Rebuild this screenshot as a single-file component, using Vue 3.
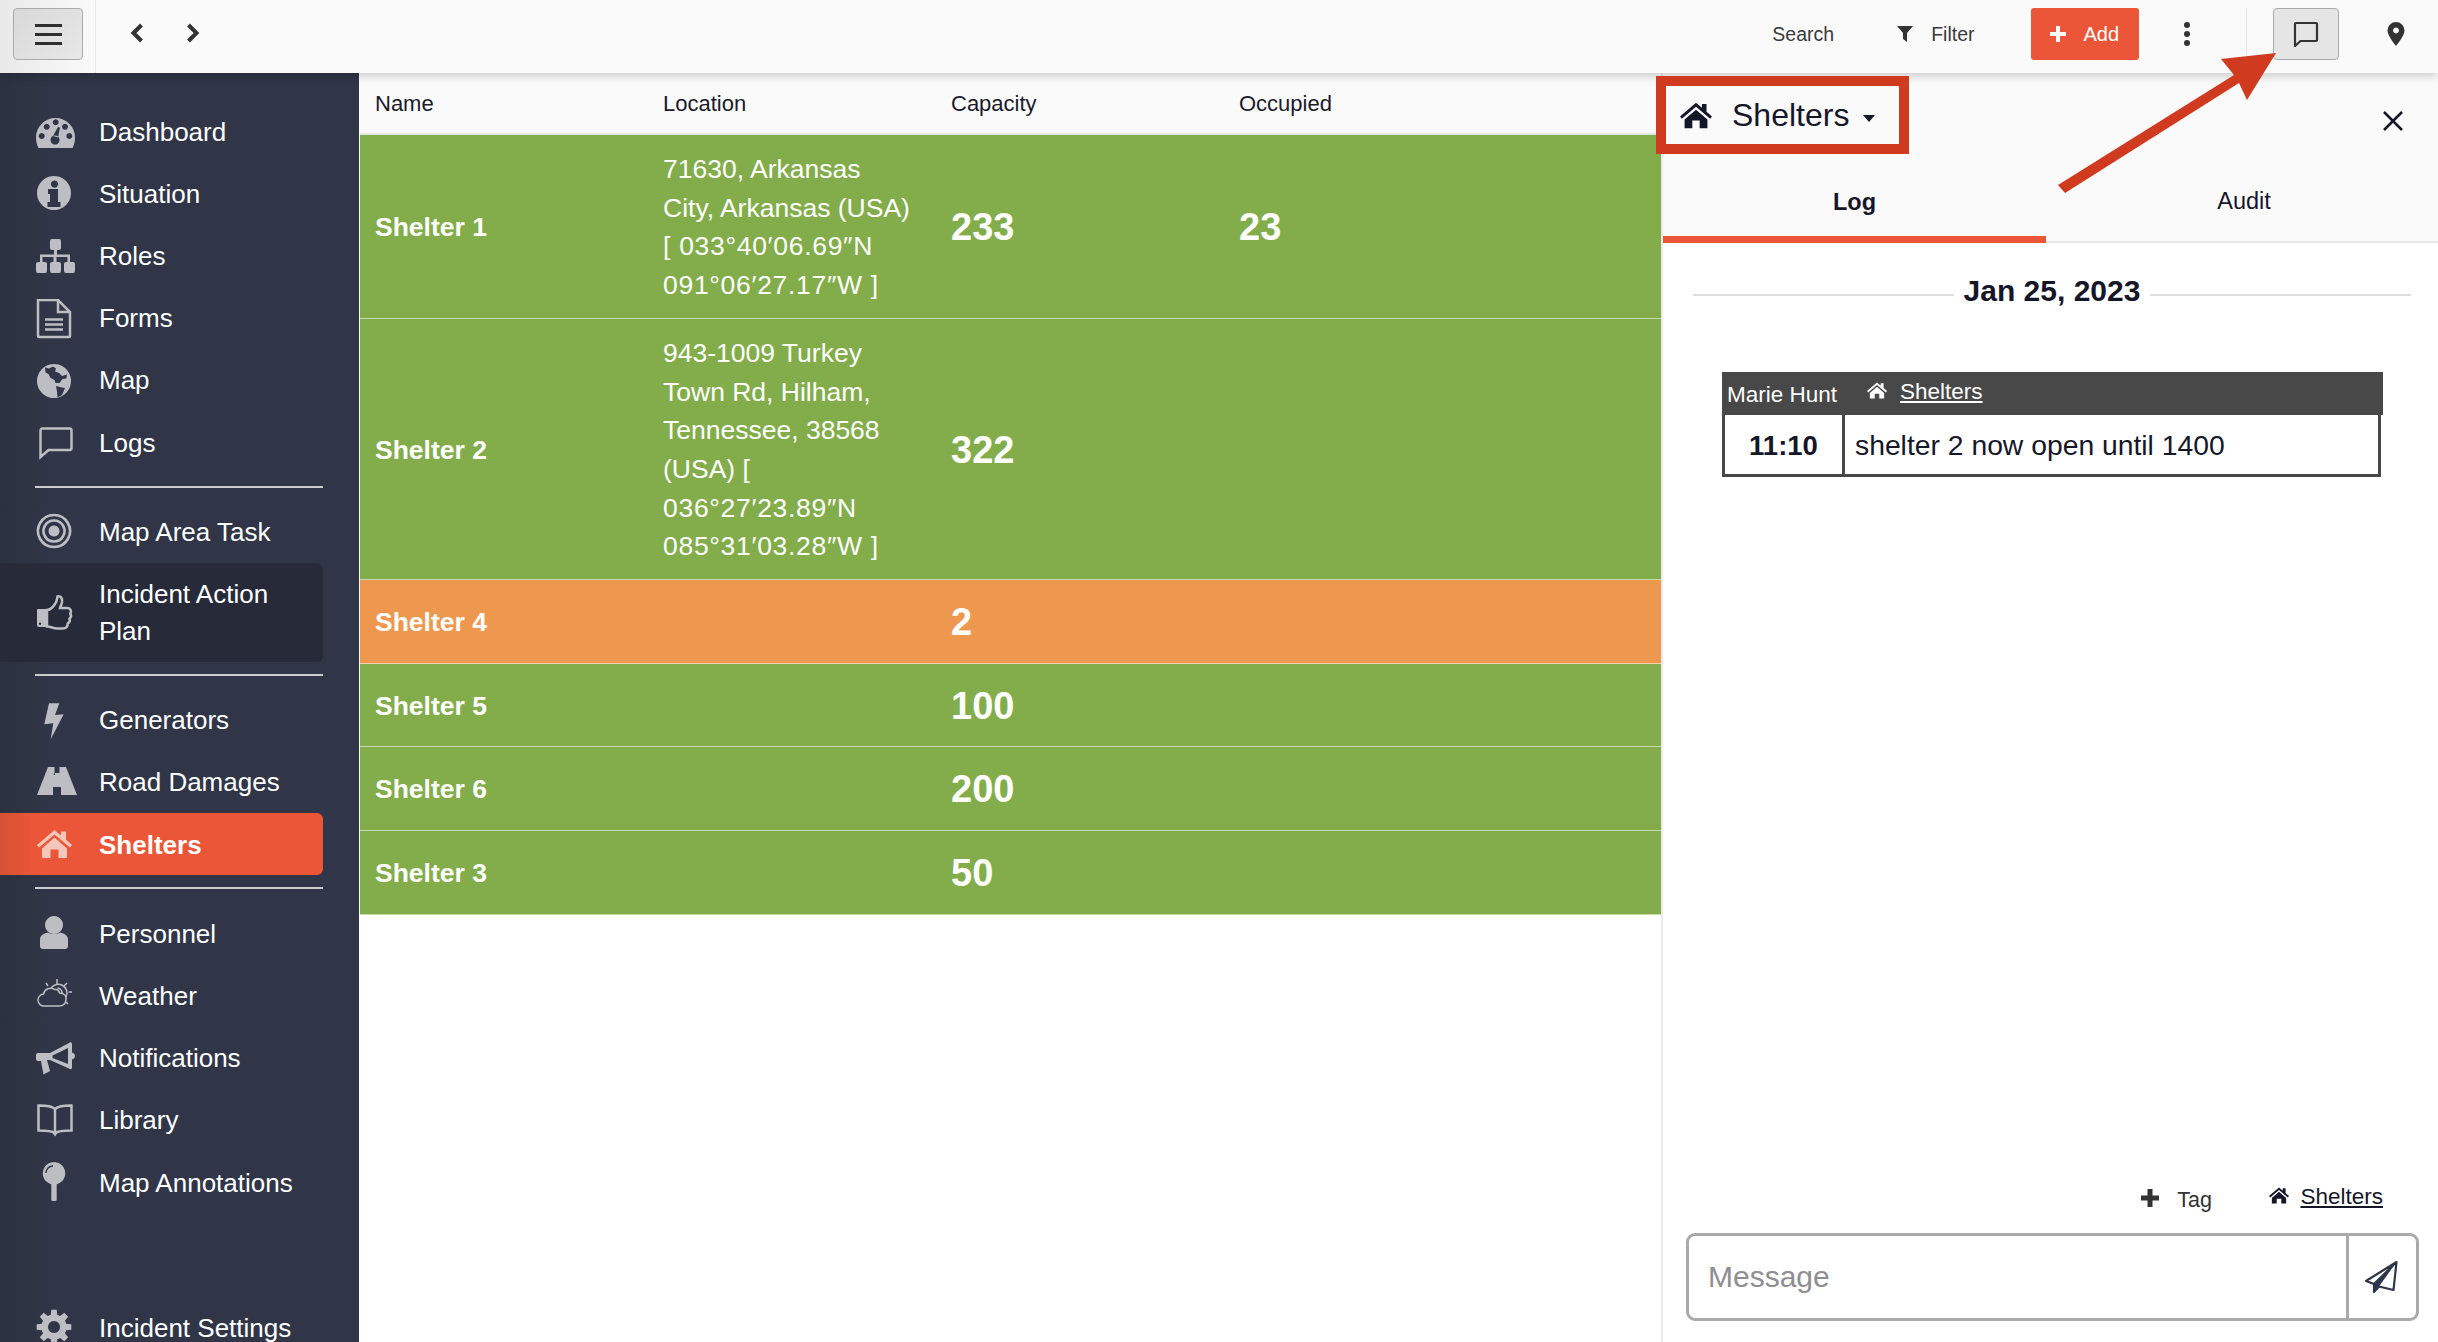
<script setup>
function gear(cx, cy, outer, inner, teeth) {
  let d = '';
  const step = (Math.PI * 2) / teeth;
  for (let i = 0; i < teeth; i++) {
    const a = i * step;
    const pts = [
      [inner, a - step * 0.34],
      [outer, a - step * 0.2],
      [outer, a + step * 0.2],
      [inner, a + step * 0.34],
    ];
    pts.forEach(([r, t], j) => {
      const x = (cx + r * Math.cos(t)).toFixed(1);
      const y = (cy + r * Math.sin(t)).toFixed(1);
      d += (i === 0 && j === 0 ? 'M' : 'L') + x + ' ' + y + ' ';
    });
  }
  return d + 'Z';
}

const homeRoof = 'M19.5 6 2 21l2 2.6L19.5 10.4 35 23.6l2-2.6-6-5.2V7.5h-5v4z';
const homeBody = 'M7 24.5 19.5 13.6 32 24.5V34H23.5V25.5h-8V34H7z';

const icons = {
  dashboard: [
    { c: 'f', d: 'M3.5 36C1.8 33 1 29 1 25.5a19.5 19.5 0 0 1 39 0c0 3.500-.8 7.500-2.500 10.500z' },
    { c: 'c', d: 'M6.700 21a3 3 0 1 0 .01 0zM11.700 11.700a3 3 0 1 0 .01 0zM20.700 7.300a3 3 0 1 0 .01 0zM30 11.700a3 3 0 1 0 .01 0zM34.300 21a3 3 0 1 0 .01 0z' },
    { c: 'c', d: 'M20 23.500a4.500 4.500 0 1 0 .01 0zM18 24l5-9 2 .5-2 10z' },
  ],
  info: [
    { c: 'f', d: 'M19 2a17 17 0 1 0 .01 0z' },
    { c: 'c', d: 'M19.500 6.500a3.600 3.600 0 1 0 .01 0zM13 15h10v13h2.500v5h-13v-5H15v-8h-2z' },
  ],
  sitemap: [
    { c: 'f', d: 'M17 3h7a2 2 0 0 1 2 2v7a2 2 0 0 1-2 2h-2v4.500h13V26h-2.500v-5h-11v5h-3v-5H7.500v5H5v-7.500h14V14h-2a2 2 0 0 1-2-2V5a2 2 0 0 1 2-2z' },
    { c: 'f', d: 'M3 26h7a2 2 0 0 1 2 2v7a2 2 0 0 1-2 2H3a2 2 0 0 1-2-2v-7a2 2 0 0 1 2-2zM17 26h7a2 2 0 0 1 2 2v7a2 2 0 0 1-2 2h-7a2 2 0 0 1-2-2v-7a2 2 0 0 1 2-2zM31 26h7a2 2 0 0 1 2 2v7a2 2 0 0 1-2 2h-7a2 2 0 0 1-2-2v-7a2 2 0 0 1 2-2z' },
  ],
  file: [
    { c: 'l', d: 'M3 1h20l12 12v24a1 1 0 0 1-1 1H4a1 1 0 0 1-1-1z' },
    { c: 'l', d: 'M23 1v12h12' },
    { c: 'l', d: 'M10 20.500h18M10 25.500h18M10 30.500h18' },
  ],
  globe: [
    { c: 'f', d: 'M19 3a17 17 0 1 0 .01 0z' },
    { c: 'c', d: 'M10 6.500l4 1 4-2 3 2-1 3 4 1.500 3 3 5-1.500-.5 4-4 .5-3 4h-4l-1-3-4-2-2-4-3-1.500z' },
    { c: 'c', d: 'M21 25l6 1.500 3 .5-3 7-4.500 2.500-.5-6z' },
  ],
  comment: [
    { c: 'l', d: 'M7 5.500h27.500a2 2 0 0 1 2 2V25a2 2 0 0 1-2 2H13.500L5.500 34V7.500a2 2 0 0 1 1.500-2z' },
  ],
  target: [
    { c: 'ring', d: 'M19 3a16 16 0 1 0 .01 0z' },
    { c: 'ring', d: 'M19 8.500a10.500 10.500 0 1 0 .01 0z' },
    { c: 'f', d: 'M19 13.500a5.500 5.500 0 1 0 .01 0z' },
  ],
  thumb: [
    { c: 'f', d: 'M3 16h9v18H4a2 2 0 0 1-2-2V17a1 1 0 0 1 1-1z' },
    { c: 'l', d: 'M12 17c3 0 6-3 8-6 2-2.500 2-5 2.500-7.500 3-1 5.500 2 4.500 6-.5 2-1.500 3.500-2 5.500h7.500c3 0 4.500 3.500 2.800 5.500 1.200 2 .7 4-.8 5.200.7 2-.3 4-1.800 4.800.3 3-1.700 5-4.700 5H22c-4 0-6-2-10-2z' },
    { c: 'c', d: 'M5 29.500a1.200 1.200 0 1 0 .01 0z' },
  ],
  bolt: [
    { c: 'f', d: 'M14 3.300h10.300L20 15l8.700-.7-13 25 2.600-16-9 1z' },
  ],
  road: [
    { c: 'f', d: 'M13 5h18l11 28H2z' },
    { c: 'c', d: 'M19.500 5h5v6h-5zM18 25h8v8h-8zM18.800 11h1v2h-1z' },
  ],
  home: [
    { c: 'f', d: homeRoof },
    { c: 'f', d: homeBody },
  ],
  user: [
    { c: 'f', d: 'M19 3a9 9 0 1 0 .01 0z' },
    { c: 'f', d: 'M5 33v-6c0-4.500 3-6.500 8-7.500 3.500 2 8.500 2 12 0 5 1 8 3 8 7.500v6a3 3 0 0 1-3 3H8a3 3 0 0 1-3-3z' },
  ],
  weather: [
    { c: 'thin', d: 'M9.500 30a6 6 0 0 1-1-12c1-5 7-7.500 11-4.500 3-.5 4.500 1 5 3.500 4.500 0 7 2.500 6.500 6.500-.3 4-3 6.500-7 6.500z' },
    { c: 'thin', d: 'M15.500 13a8.500 8.500 0 0 1 15.500 8' },
    { c: 'thin', d: 'M22 3v5M32 7l-3 3M37 16h-3.500M33 28l-2-2M11 7l2 3M22.500 12c3 .5 5 3 4.500 6' },
  ],
  bullhorn: [
    { c: 'f', d: 'M3 15h12L35 4.500c1-.5 2 0 2 1.500v8.500c1.500 .5 3 1.500 3 3.500s-1.500 3-3 3.500v8c0 1.500-1 2-2 1.500l-20-9h-3l3 11-6.500 3.500L6 23H3a2 2 0 0 1-2-2v-4a2 2 0 0 1 2-2z' },
    { c: 'c', d: 'M17.500 17.500 33 10v16l-15.500-6z' },
  ],
  book: [
    { c: 'l', d: 'M20 9C17 6 13 5.500 3.500 5.500v25c9.500 0 13.500.5 16.500 2.500 3-2 7-2.500 16.500-2.500v-25C27 5.500 23 6 20 9zM20 9v24' },
    { c: 'f', d: 'M17.500 33h5L20 36.500z' },
  ],
  pin: [
    { c: 'f', d: 'M19 0a11.300 11.300 0 1 0 .01 0z' },
    { c: 'f', d: 'M16.300 22h5.400v15.500a1.500 1.500 0 0 1-1.500 1.500h-2.400a1.500 1.500 0 0 1-1.500-1.500z' },
    { c: 'hl', d: 'M11 11c0-4 3-7 7-7' },
  ],
  gear: [
    { c: 'f', d: gear(19, 20, 17.500, 12.500, 8) },
    { c: 'f', d: 'M19 7.500a12.500 12.500 0 1 0 .01 0z' },
    { c: 'c', d: 'M19 14a6 6 0 1 0 .01 0z' },
  ],
};

const navGroups = [
  {
    items: [
      { label: 'Dashboard', icon: 'dashboard' },
      { label: 'Situation', icon: 'info' },
      { label: 'Roles', icon: 'sitemap' },
      { label: 'Forms', icon: 'file' },
      { label: 'Map', icon: 'globe' },
      { label: 'Logs', icon: 'comment' },
    ],
  },
  {
    items: [
      { label: 'Map Area Task', icon: 'target' },
      { label: 'Incident Action Plan', icon: 'thumb', state: 'hover' },
    ],
  },
  {
    items: [
      { label: 'Generators', icon: 'bolt' },
      { label: 'Road Damages', icon: 'road' },
      { label: 'Shelters', icon: 'home', state: 'active' },
    ],
  },
  {
    items: [
      { label: 'Personnel', icon: 'user' },
      { label: 'Weather', icon: 'weather' },
      { label: 'Notifications', icon: 'bullhorn' },
      { label: 'Library', icon: 'book' },
      { label: 'Map Annotations', icon: 'pin' },
    ],
  },
];

const settings = { label: 'Incident Settings', icon: 'gear' };

const shelters = [
  {
    name: 'Shelter 1',
    location: ['71630, Arkansas', 'City, Arkansas (USA)', '[ 033°40′06.69″N', '091°06′27.17″W ]'],
    capacity: 233,
    occupied: 23,
  },
  {
    name: 'Shelter 2',
    location: ['943-1009 Turkey', 'Town Rd, Hilham,', 'Tennessee, 38568', '(USA) [', '036°27′23.89″N', '085°31′03.28″W ]'],
    capacity: 322,
  },
  { name: 'Shelter 4', location: [], capacity: 2, warn: true },
  { name: 'Shelter 5', location: [], capacity: 100 },
  { name: 'Shelter 6', location: [], capacity: 200 },
  { name: 'Shelter 3', location: [], capacity: 50 },
];
</script>

<template>
  <div class="app">
    <header class="topbar">
      <div class="burger-cell">
        <button class="burger"><span></span><span></span><span></span></button>
      </div>
      <div class="history">
        <svg width="16" height="22" viewBox="0 0 16 22"><path d="M12.500 3 4.500 11l8 8" class="chev" /></svg>
        <svg width="16" height="22" viewBox="0 0 16 22"><path d="M3.500 3l8 8-8 8" class="chev" /></svg>
      </div>
      <div class="actions">
        <span class="action search">Search</span>
        <span class="action filter">
          <svg width="16" height="16" viewBox="0 0 16 16"><path d="M0 0h16L10 7v9L6 13V7z" fill="#333" /></svg>
          Filter
        </span>
        <button class="add">
          <svg width="16" height="16" viewBox="0 0 16 16"><path d="M6 0h4v6h6v4h-6v6H6v-6H0V6h6z" fill="#fff" /></svg>
          Add
        </button>
        <span class="dots"><i></i><i></i><i></i></span>
        <span class="divider"></span>
        <button class="chat-btn">
          <svg width="26" height="26" viewBox="0 0 26 26"><path d="M3 2h20a1 1 0 0 1 1 1v16a1 1 0 0 1-1 1H7.500L2 25V3a1 1 0 0 1 1-1z" fill="none" stroke="#333" stroke-width="2.200" /></svg>
        </button>
        <svg class="pin" width="18" height="24" viewBox="0 0 18 24"><path d="M9 0a8.500 8.500 0 0 1 8.500 8.500C17.500 14 9 24 9 24S.5 14 .5 8.500A8.500 8.500 0 0 1 9 0zm0 5.500a3 3 0 1 0 .01 0z" fill="#333" fill-rule="evenodd" /></svg>
      </div>
    </header>

    <div class="main">
      <aside class="sidebar">
        <div v-for="(group, g) in navGroups" :key="g" class="nav-group">
          <div
            v-for="item in group.items"
            :key="item.label"
            class="nav-item"
            :class="item.state"
          >
            <svg class="nav-icon" width="44" height="40" viewBox="0 0 44 40">
              <path v-for="(p, i) in icons[item.icon]" :key="i" :d="p.d" :class="p.c" />
            </svg>
            <span>{{ item.label }}</span>
          </div>
        </div>
        <div class="nav-item settings">
          <svg class="nav-icon" width="44" height="40" viewBox="0 0 44 40">
            <path v-for="(p, i) in icons[settings.icon]" :key="i" :d="p.d" :class="p.c" />
          </svg>
          <span>{{ settings.label }}</span>
        </div>
      </aside>

      <section class="table">
        <div class="row head">
          <div class="cell">Name</div>
          <div class="cell">Location</div>
          <div class="cell">Capacity</div>
          <div class="cell">Occupied</div>
          <div class="cell"></div>
        </div>
        <div v-for="s in shelters" :key="s.name" class="row shelter" :class="{ warn: s.warn }">
          <div class="cell name">{{ s.name }}</div>
          <div class="cell location">
            <div v-for="line in s.location" :key="line" :class="{ coord: line.includes('°') }">{{ line }}</div>
          </div>
          <div class="cell num">{{ s.capacity }}</div>
          <div class="cell num">{{ s.occupied }}</div>
          <div class="cell"></div>
        </div>
      </section>

      <section class="panel">
        <div class="panel-title">
          <svg width="32" height="27" viewBox="2 6 35 28">
            <path :d="homeRoof" fill="#161629" /><path :d="homeBody" fill="#161629" />
          </svg>
          <span class="title-text">Shelters</span>
          <span class="caret"></span>
          <svg class="close" width="22" height="20" viewBox="0 0 22 20"><path d="M2 1l18 18M20 1 2 19" stroke="#161629" stroke-width="2.500" fill="none" /></svg>
        </div>
        <div class="tabs">
          <div class="tab current">Log</div>
          <div class="tab">Audit</div>
        </div>
        <div class="log-body">
          <div class="date-row">
            <span class="date-line"></span>
            <span class="date">Jan 25, 2023</span>
            <span class="date-line"></span>
          </div>
          <div class="entry">
            <div class="entry-head">
              <span class="author">Marie Hunt</span>
              <svg width="20" height="17" viewBox="2 6 35 28">
                <path :d="homeRoof" fill="#fff" /><path :d="homeBody" fill="#fff" />
              </svg>
              <a class="tag-link">Shelters</a>
            </div>
            <div class="entry-body">
              <div class="time">11:10</div>
              <div class="message">shelter 2 now open until 1400</div>
            </div>
          </div>
        </div>
        <div class="composer">
          <div class="tag-row">
            <svg width="18" height="18" viewBox="0 0 18 18"><path d="M6.500 0h5v6.500H18v5h-6.500V18h-5v-6.500H0v-5h6.500z" fill="#333" /></svg>
            <span class="tag-add">Tag</span>
            <svg class="tag-home" width="20" height="17" viewBox="2 6 35 28">
              <path :d="homeRoof" fill="#161629" /><path :d="homeBody" fill="#161629" />
            </svg>
            <a class="tag-current">Shelters</a>
          </div>
          <div class="input-box">
            <div class="input-text">Message</div>
            <div class="send">
              <svg width="33" height="33" viewBox="0 0 33 33">
                <path d="M31.500 1 1 20l8 3v8l5-5.500L28.500 29zM31.500 1 9 23" fill="none" stroke="#30364a" stroke-width="2.200" stroke-linejoin="round" />
                <path d="M9 23v8l5-5.500L31.500 1z" fill="#30364a" />
              </svg>
            </div>
          </div>
        </div>
      </section>
    </div>

    <!-- annotations drawn on top of the screenshot -->
    <div class="red-box"></div>
    <svg class="arrow" width="240" height="160" viewBox="2050 45 240 160">
      <path d="M2058 185 2234 75 2221 59 2276 53 2247 100 2239 83 2065 193z" fill="#d03a1e" />
    </svg>
  </div>
</template>

<style scoped>
.app {
  position: relative;
  width: 2438px;
  height: 1342px;
  overflow: hidden;
  display: flex;
  flex-direction: column;
  background: #fff;
  font-family: "Liberation Sans", Arial, sans-serif;
  color: #161629;
}

.topbar {
  position: relative;
  z-index: 2;
  flex: 0 0 73px;
  box-sizing: border-box;
  display: flex;
  align-items: center;
  padding-bottom: 5px;
  background: #fafafa;
  box-shadow: 0 2px 10px rgba(0, 0, 0, 0.22);
}
.burger-cell {
  width: 96px;
  height: 73px;
  margin-bottom: -5px;
  padding-bottom: 5px;
  display: flex;
  align-items: center;
  padding-left: 13px;
  box-sizing: border-box;
  background: linear-gradient(90deg, #e9e9e9, #fafafa);
  border-right: 1px solid #e8e8e8;
}
.burger {
  width: 70px;
  height: 52px;
  padding: 0;
  display: flex;
  flex-direction: column;
  align-items: center;
  justify-content: center;
  gap: 6px;
  border: 1px solid #ababab;
  border-radius: 4px;
  background: linear-gradient(135deg, #d9d9d9, #e8e8e8);
}
.burger span {
  width: 27px;
  height: 3px;
  background: #2f2f2f;
}
.history {
  display: flex;
  gap: 40px;
  margin-left: 33px;
  margin-top: -3px;
}
.chev {
  fill: none;
  stroke: #333;
  stroke-width: 4;
}
.actions {
  margin-left: auto;
  display: flex;
  align-items: center;
  font-size: 19.500px;
  color: #3a3a3a;
}
.action {
  display: flex;
  align-items: center;
}
.filter {
  gap: 18px;
  margin-left: 63px;
}
.add {
  margin-left: 56px;
  width: 108px;
  height: 52px;
  display: flex;
  align-items: center;
  gap: 18px;
  padding: 0 0 0 19px;
  border: 0;
  border-radius: 3px;
  background: #eb5638;
  color: #fff;
  font: 20px "Liberation Sans", Arial, sans-serif;
}
.dots {
  margin-left: 45px;
  display: flex;
  flex-direction: column;
  gap: 3px;
  width: 7px;
}
.dots i {
  width: 6px;
  height: 6px;
  border-radius: 50%;
  background: #333;
}
.divider {
  width: 1px;
  height: 52px;
  margin-left: 55.500px;
  background: #e6e6e6;
}
.chat-btn {
  margin-left: 26px;
  width: 66px;
  height: 52px;
  padding: 0;
  display: flex;
  align-items: center;
  justify-content: center;
  border: 1px solid #ababab;
  border-radius: 4px;
  background: #e5e5e5;
}
.pin {
  margin-left: 48px;
  margin-right: 33px;
}

.main {
  flex: 1;
  display: flex;
  min-height: 0;
}

.sidebar {
  flex: 0 0 359px;
  box-sizing: border-box;
  padding-top: 28px;
  background: linear-gradient(90deg, #2c3140 0, #303647 50px);
  color: #fff;
  font-size: 26px;
  line-height: 37px;
}
.nav-group {
  margin: 0 36px 13px 0;
  padding-bottom: 12px;
  width: 323px;
  border-bottom: 2px solid #c9cbd0;
  border-image: linear-gradient(90deg, transparent 36px, #c9cbd0 36px) 1;
}
.nav-group:nth-child(4) {
  border-bottom: 0;
  margin-bottom: 0;
  padding-bottom: 0;
}
.nav-group:nth-child(n + 3) .nav-item span {
  padding-top: 2px;
}
.nav-item {
  --cut: #303647;
  min-height: 62.200px;
  display: flex;
  align-items: center;
  padding-left: 35px;
  padding-right: 20px;
  box-sizing: border-box;
  color: #fff;
}
.nav-item span {
  margin-left: 20px;
}
.nav-icon {
  flex: none;
  color: #bcbec4;
}
.nav-item.hover {
  --cut: #272b39;
  min-height: 98.400px;
  background: #272b39;
  border-radius: 0 6px 6px 0;
}
.nav-item.active {
  --cut: #eb5638;
  background: linear-gradient(90deg, #d65235 0, #eb5638 35px);
  border-radius: 0 6px 6px 0;
  font-weight: 700;
}
.nav-item.active .nav-icon {
  color: #f7c6ba;
}
.settings {
  margin-top: 83px;
}
.settings span {
  padding-top: 2px;
}
.nav-icon .f {
  fill: currentColor;
}
.nav-icon .c {
  fill: var(--cut);
}
.nav-icon .l {
  fill: none;
  stroke: currentColor;
  stroke-width: 2.500;
}
.nav-icon .thin {
  fill: none;
  stroke: currentColor;
  stroke-width: 1.500;
}
.nav-icon .ring {
  fill: none;
  stroke: currentColor;
  stroke-width: 2.600;
}
.nav-icon .hl {
  fill: none;
  stroke: var(--cut);
  stroke-width: 1.500;
}

.table {
  flex: 0 0 1301px;
  margin-left: 1px;
  font-size: 26.500px;
  line-height: 38.700px;
}
.row {
  display: grid;
  grid-template-columns: 288px 288px 288px 288px 1fr;
}
.row.head {
  height: 62px;
  box-sizing: border-box;
  align-items: center;
  background: #fafafa;
  border-bottom: 2px solid #e4e4e4;
  font-size: 22px;
  line-height: 26px;
  padding-top: 2px;
  color: #1b1b2b;
}
.cell {
  padding: 0 15px;
}
.shelter {
  align-items: center;
  background: #82ad4a;
  color: #fff;
  border-bottom: 1px solid rgba(255, 255, 255, 0.55);
  padding: 15px 0 13px;
  min-height: 83.700px;
  box-sizing: border-box;
}
.shelter.warn {
  background: #ee984f;
}
.name {
  font-weight: 700;
}
.location {
  padding-right: 10px;
}
.coord {
  letter-spacing: 0.700px;
}
.num {
  font-size: 38px;
  font-weight: 700;
}

.panel {
  flex: 1;
  min-width: 0;
  display: flex;
  flex-direction: column;
  border-left: 2px solid #ebebeb;
}
.panel-title {
  flex: 0 0 97px;
  display: flex;
  align-items: center;
  padding: 0 0 13px 17px;
  box-sizing: border-box;
  background: #fafafa;
}
.title-text {
  margin-left: 20px;
  font-size: 32px;
}
.caret {
  margin-left: 14px;
  margin-top: 7px;
  border-top: 7px solid #161629;
  border-left: 6.500px solid transparent;
  border-right: 6.500px solid transparent;
}
.close {
  margin-left: auto;
  margin-right: 34px;
  margin-top: 11px;
}
.tabs {
  flex: 0 0 73px;
  display: flex;
  background: #fafafa;
  border-bottom: 2px solid #e7e7e7;
  box-sizing: border-box;
  font-size: 23.500px;
}
.tab {
  flex: 1;
  display: flex;
  align-items: center;
  justify-content: center;
  padding-bottom: 8px;
  padding-left: 4px;
}
.tab.current {
  flex: 0 0 383px;
  box-sizing: border-box;
  padding-left: 0;
  font-weight: 700;
  margin-bottom: -2px;
  border-bottom: 7px solid #eb5638;
  padding-top: 7px;
  padding-bottom: 8px;
}
.log-body {
  flex: 1;
  padding: 30px 27px 0 30px;
}
.date-row {
  display: flex;
  height: 36px;
  line-height: 36px;
  align-items: flex-start;
  gap: 10px;
}
.date {
  font-size: 30px;
  font-weight: 700;
  white-space: nowrap;
}
.date-line {
  flex: 1;
  height: 2px;
  margin-top: 21px;
  background: #dedede;
}
.entry {
  margin: 63px 28px 0 29px;
}
.entry-head {
  height: 43px;
  display: flex;
  align-items: center;
  background: #484848;
  color: #fff;
  font-size: 22.500px;
}
.author {
  margin-left: 5px;
  width: 140px;
  padding-top: 2px;
}
.tag-link {
  margin-left: 13px;
  text-decoration: underline;
  margin-top: -3px;
}
.entry-head svg {
  margin-top: -7px;
}
.entry-body {
  display: flex;
  height: 62px;
  margin-right: 2px;
  box-sizing: border-box;
  border: 3px solid #484848;
  border-top: 0;
  background: #fff;
}
.time {
  flex: 0 0 120px;
  box-sizing: border-box;
  display: flex;
  align-items: center;
  justify-content: center;
  padding-top: 2px;
  border-right: 3px solid #484848;
  font-size: 27.500px;
  font-weight: 700;
}
.message {
  display: flex;
  align-items: center;
  padding-top: 2px;
  padding-left: 10px;
  font-size: 28.300px;
}
.composer {
  padding: 0 19px 21px 23px;
}
.tag-row {
  display: flex;
  align-items: center;
  justify-content: flex-end;
  height: 30px;
  margin-bottom: 20px;
  padding-top: 2px;
  padding-right: 36px;
  font-size: 22.500px;
}
.tag-add {
  margin-left: 18px;
  font-size: 21.500px;
  color: #333;
  margin-top: 4px;
}
.tag-home {
  margin-left: 57.500px;
  margin-top: -5px;
}
.tag-current {
  margin-left: 11px;
  text-decoration: underline;
  margin-top: -3px;
}
.input-box {
  height: 88px;
  display: flex;
  box-sizing: border-box;
  border: 3px solid #aaa;
  border-radius: 9px;
  background: #fff;
}
.input-text {
  flex: 1;
  display: flex;
  align-items: center;
  padding-left: 19px;
  font-size: 30px;
  color: #8e8e93;
}
.send {
  flex: 0 0 70px;
  display: flex;
  align-items: center;
  justify-content: center;
  border-left: 3px solid #aaa;
  padding-right: 2px;
  box-sizing: border-box;
}

.red-box {
  position: absolute;
  z-index: 3;
  left: 1656px;
  top: 76px;
  width: 253px;
  height: 78px;
  box-sizing: border-box;
  border: 10px solid #d03a1e;
}
.arrow {
  position: absolute;
  z-index: 3;
  left: 2050px;
  top: 45px;
}
</style>
